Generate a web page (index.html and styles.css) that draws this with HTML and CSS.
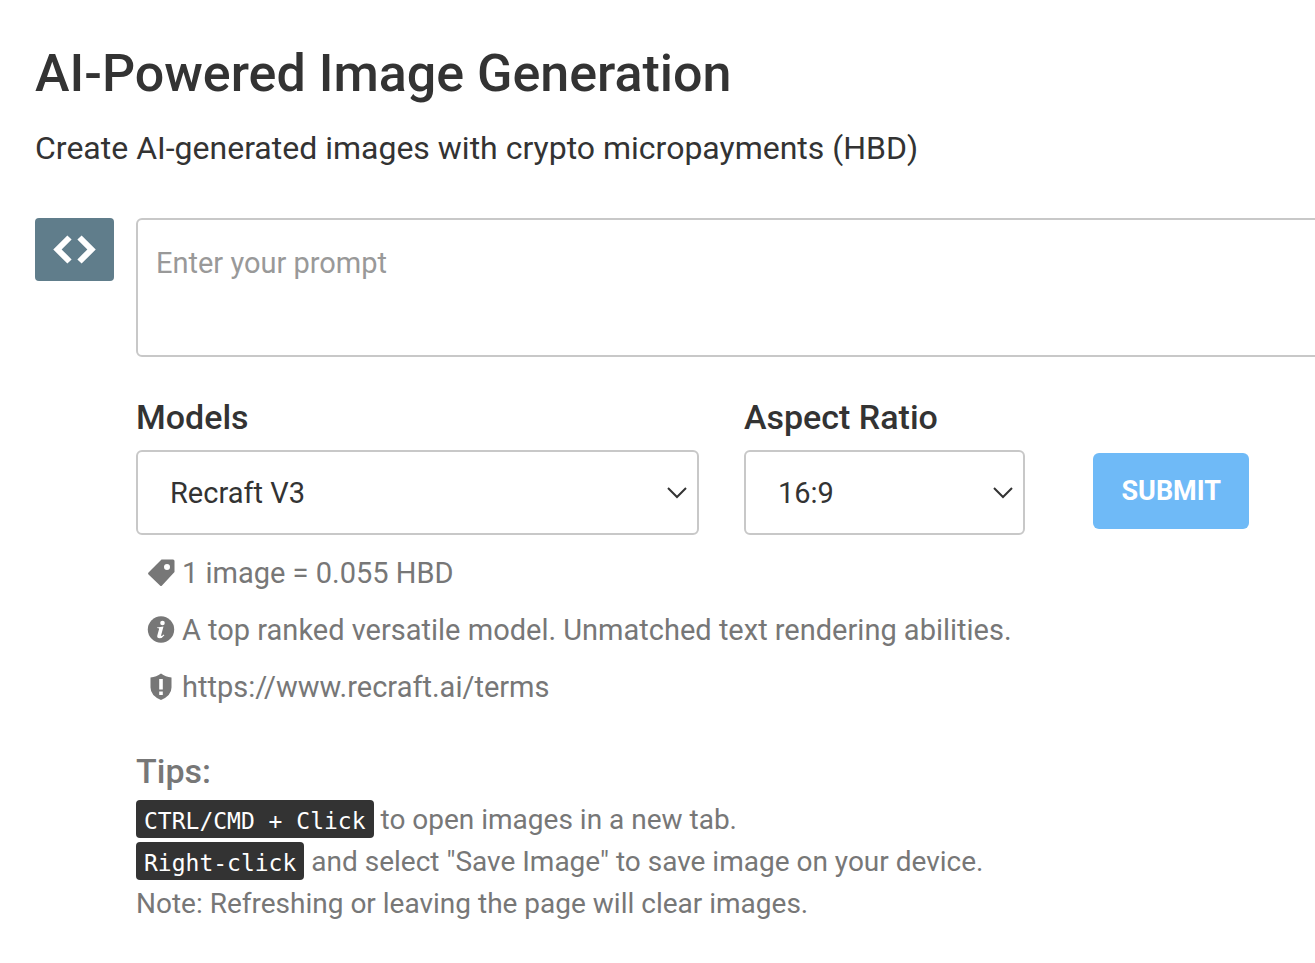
FILE: index.html
```html
<!DOCTYPE html>
<html lang="en">
<head>
  <meta charset="UTF-8" />
  <meta name="viewport" content="width=device-width, initial-scale=1.0" />
  <title>AI-Powered Image Generation</title>
  <link rel="stylesheet" href="styles.css">
</head>
<body>
  <main class="container">
    <h1>AI-Powered Image Generation</h1>
    <p class="subtitle">Create AI-generated images with crypto micropayments (HBD)</p>

    <form class="generator">
      <button type="button" class="code-btn" aria-label="Toggle panel">
        <svg viewBox="0 0 44 30" aria-hidden="true">
          <path d="M16.500 2.500 4.500 14.500l12 12M26.500 2.500l12 12-12 12" />
        </svg>
      </button>

      <div class="fields">
        <textarea class="prompt" placeholder="Enter your prompt" aria-label="Prompt"></textarea>

        <div class="options">
          <div class="field field-model">
            <label for="model">Models</label>
            <select id="model">
              <option>Recraft V3</option>
            </select>
          </div>
          <div class="field field-ratio">
            <label for="ratio">Aspect Ratio</label>
            <select id="ratio">
              <option>16:9</option>
            </select>
          </div>
          <button type="submit" class="submit-btn">SUBMIT</button>
        </div>

        <ul class="model-info">
          <li>
            <svg viewBox="0 0 28 28" aria-hidden="true">
              <path fill-rule="evenodd" d="M14.500.5h11.500q1.500 0 1.500 1.500v11L15 26.500q-1 1-2 0L1.500 15.500q-1-1 0-2zM20 5a3 3 0 1 0 0 6 3 3 0 0 0 0-6z" />
            </svg>
            <span>1 image = 0.055 HBD</span>
          </li>
          <li>
            <svg viewBox="0 0 28 28" aria-hidden="true">
              <circle cx="14" cy="13.500" r="13.200" />
              <g class="cutout">
                <circle cx="15.500" cy="7" r="2.300" />
                <path d="M10 11.500l6.500-1-2.300 8.500q-.3 1.200.5 1 .8-.3 1.900-1.500l.8.7q-2.200 3-4.900 3-2.800 0-2.200-2.700l1.800-6.500q.2-.7-.6-.8l-1.500-.1z" />
              </g>
            </svg>
            <span>A top ranked versatile model. Unmatched text rendering abilities.</span>
          </li>
          <li>
            <svg viewBox="0 0 28 28" aria-hidden="true">
              <path d="M14 .5q4.500 3.500 10.500 4v10q0 8-10.500 12.500-10.500-4.500-10.500-12.500v-10q6-.5 10.500-4z" />
              <g class="cutout">
                <path d="M12.200 6h3.600v10.500h-3.600zM12.200 18.500h3.600v3.500h-3.600z" />
              </g>
            </svg>
            <span>https://www.recraft.ai/terms</span>
          </li>
        </ul>

        <section class="tips">
          <h2>Tips:</h2>
          <p><kbd>CTRL/CMD + Click</kbd> to open images in a new tab.</p>
          <p><kbd>Right-click</kbd> and select "Save Image" to save image on your device.</p>
          <p>Note: Refreshing or leaving the page will clear images.</p>
        </section>
      </div>
    </form>
  </main>
</body>
</html>
```
FILE: styles.css
```css
* {
  box-sizing: border-box;
}
body {
  margin: 0;
  background-color: #ffffff;
  color: #333333;
  font-family: Roboto, "Liberation Sans", sans-serif;
  font-size: 29px;
  overflow-x: hidden;
}
.container {
  padding: 40px 0 40px 35px;
}
h1 {
  margin: 0;
  font-size: 52px;
  font-weight: 500;
  line-height: 68px;
}
.subtitle {
  margin: 18px 0 48px;
  font-size: 32px;
  line-height: 44px;
}
.generator {
  display: flex;
  align-items: flex-start;
  gap: 22px;
}
.code-btn {
  flex: none;
  width: 79px;
  height: 63px;
  padding: 0;
  border: none;
  border-radius: 4px;
  background-color: #607d8b;
  cursor: pointer;
}
.code-btn svg {
  display: block;
  width: 44px;
  height: 30px;
  margin: 0 auto;
  fill: none;
  stroke: #ffffff;
  stroke-width: 6;
}
.fields {
  flex: 1;
  min-width: 0;
}
/* the prompt box runs off the right edge of the window */
.prompt {
  display: block;
  width: calc(100% + 20px);
  height: 139px;
  padding: 23px 18px;
  border: 2px solid #c8c8c8;
  border-radius: 6px;
  background-color: #ffffff;
  color: #333333;
  font: inherit;
  line-height: 40px;
  resize: none;
}
.prompt::placeholder {
  color: #999999;
}
.options {
  display: flex;
  align-items: flex-end;
  margin: 38px 66px 0 0;
}
.field label {
  display: block;
  margin-bottom: 11px;
  font-size: 34px;
  font-weight: 500;
  line-height: 44px;
}
.field select {
  display: block;
  width: 100%;
  height: 85px;
  padding: 0 32px;
  border: 2px solid #c8c8c8;
  border-radius: 6px;
  appearance: none;
  background: #ffffff url("data:image/svg+xml,%3Csvg xmlns='http://www.w3.org/2000/svg' viewBox='0 0 20 12'%3E%3Cpath d='M1 1l9 9 9-9' fill='none' stroke='%23333' stroke-width='2'/%3E%3C/svg%3E") no-repeat right 10px center / 20px 12px;
  color: #333333;
  font: inherit;
}
.field-model {
  flex: 2;
  margin-right: 45px;
}
.field-ratio {
  flex: 1;
  margin-right: 68px;
}
.submit-btn {
  flex: none;
  height: 76px;
  margin-bottom: 6px;
  padding: 0 28px;
  border: none;
  border-radius: 6px;
  background-color: #6fbaf7;
  color: #ffffff;
  font: 700 27px Roboto, "Liberation Sans", sans-serif;
  cursor: pointer;
}
.model-info {
  margin: 18px 0 0;
  padding: 0 0 0 11px;
  list-style: none;
  color: #777777;
}
.model-info li {
  display: flex;
  align-items: center;
  gap: 7px;
  margin-bottom: 17px;
  line-height: 40px;
}
.model-info svg {
  flex: none;
  width: 28px;
  height: 28px;
  fill: #777777;
}
.model-info .cutout {
  fill: #ffffff;
}
.tips {
  margin-top: 42px;
  color: #777777;
  font-size: 28px;
}
.tips h2 {
  margin: 0 0 6px;
  font-size: 34px;
  font-weight: 500;
  line-height: 44px;
}
.tips p {
  margin: 0;
  line-height: 42px;
}
.tips kbd {
  display: inline-block;
  padding: 4px 8px 0;
  border-radius: 4px;
  background-color: #333333;
  color: #ffffff;
  font-family: "DejaVu Sans Mono", monospace;
  font-size: 23px;
  line-height: 34px;
}
```
